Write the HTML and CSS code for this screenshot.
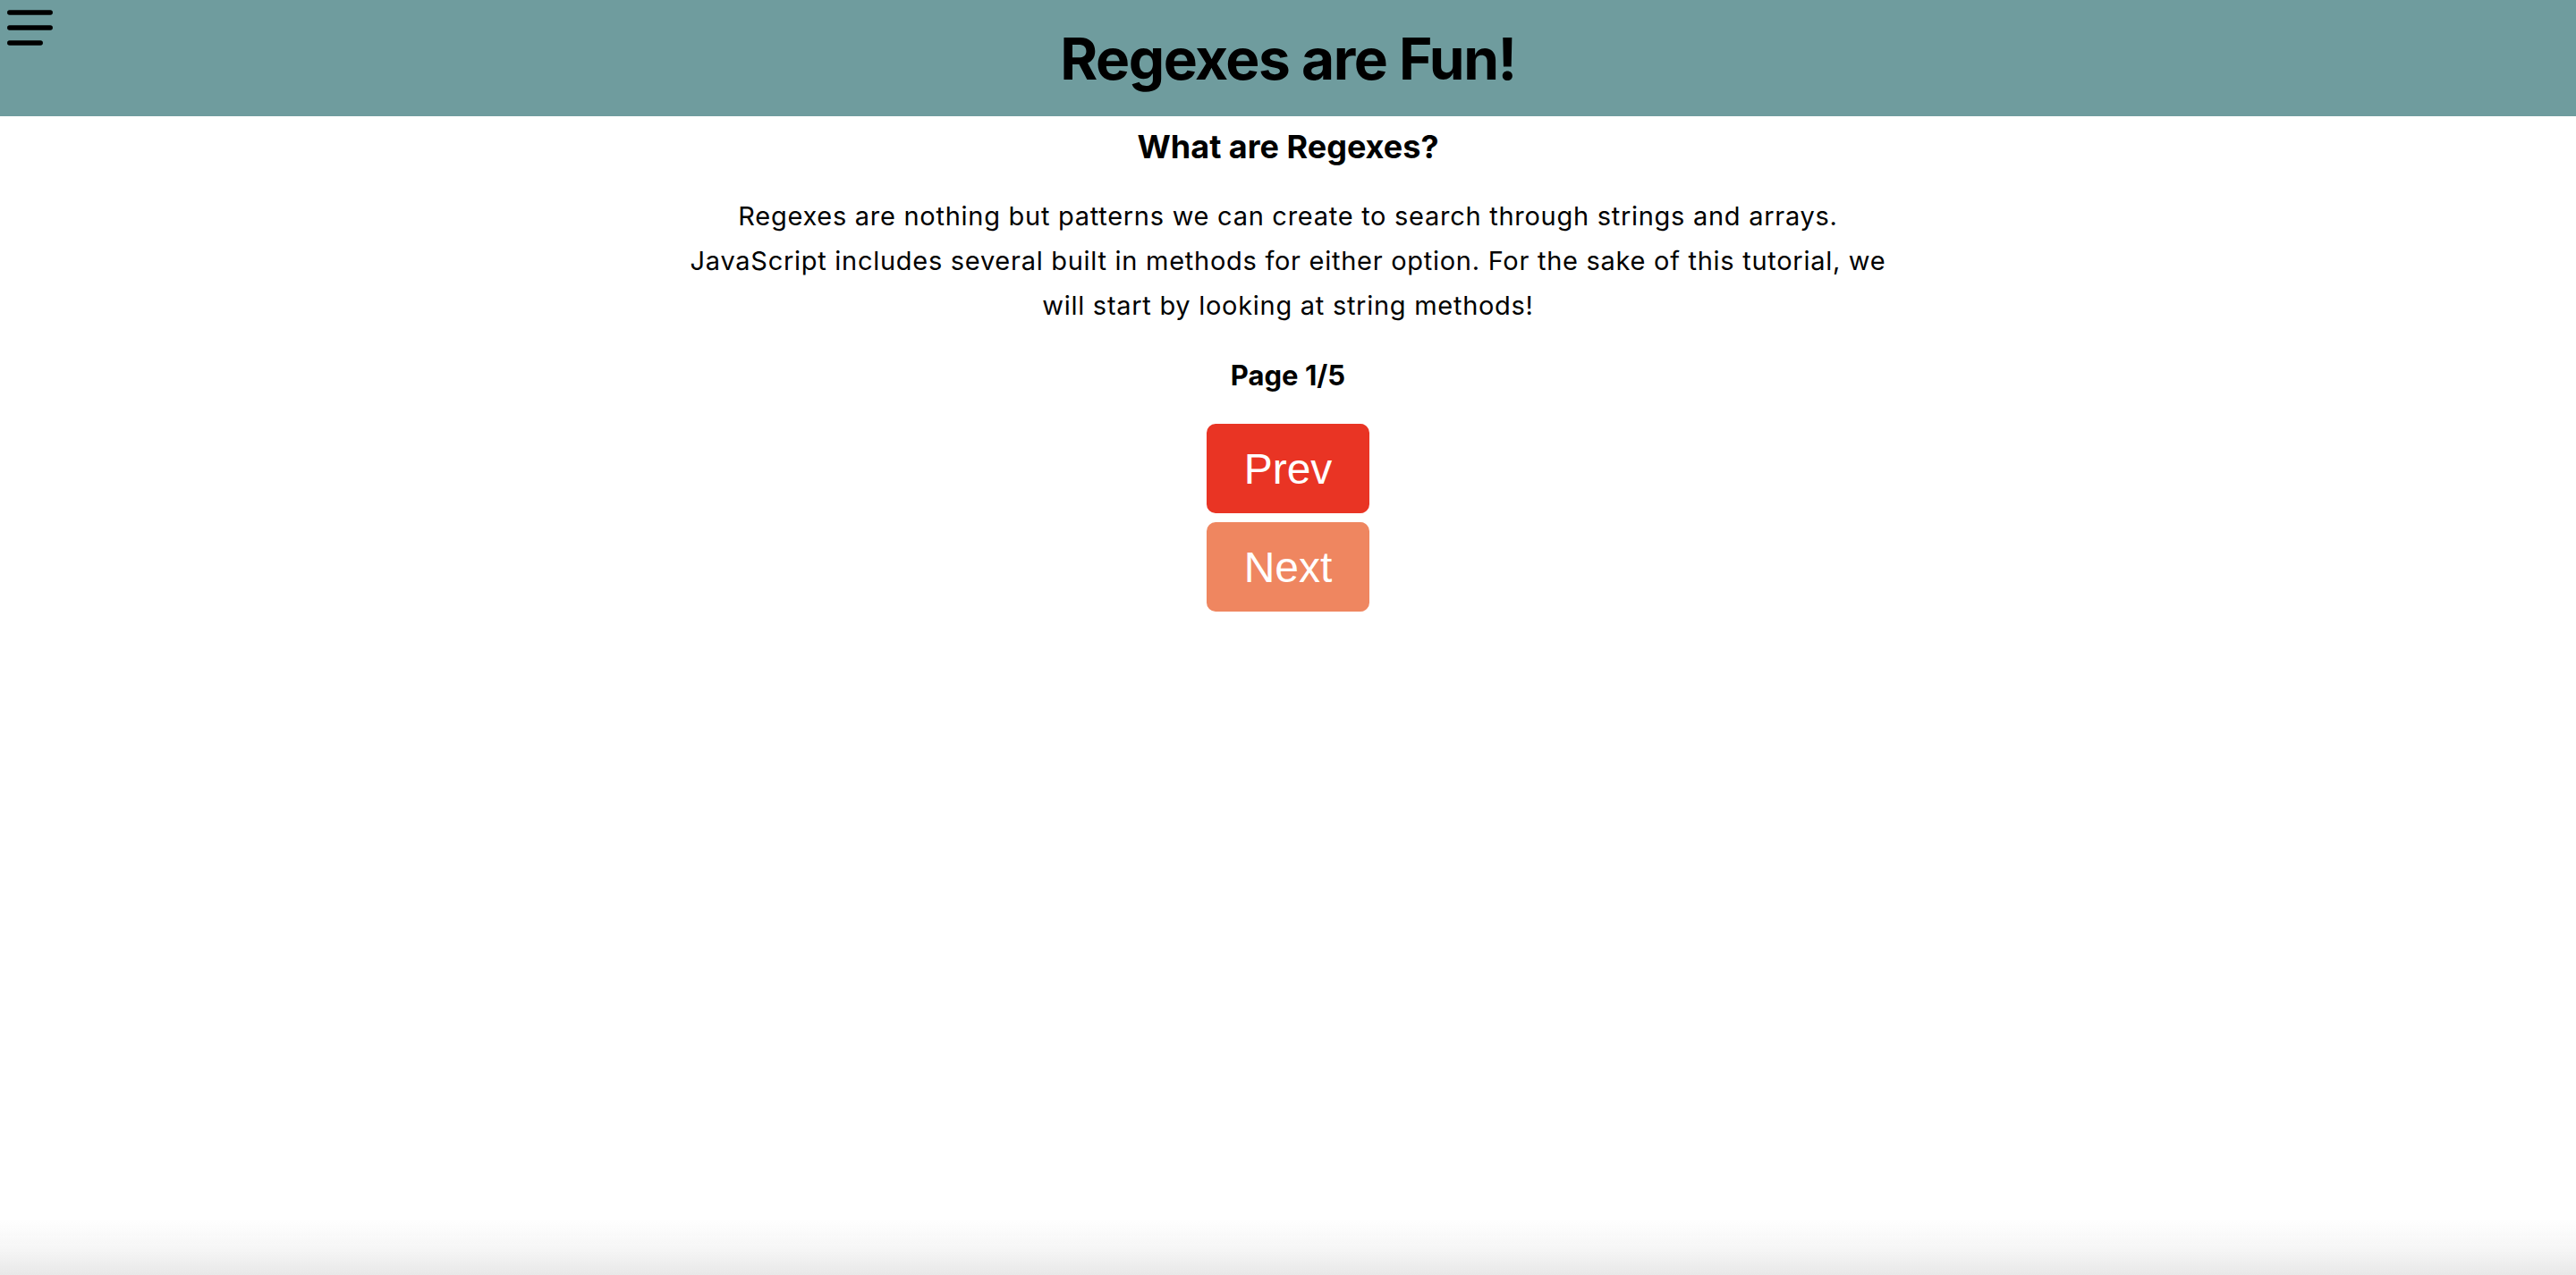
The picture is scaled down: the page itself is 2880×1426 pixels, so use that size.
FILE: index.html
```html
<!DOCTYPE html>
<html lang="en">
<head>
<meta charset="utf-8">
<title>Regexes are Fun!</title>
<link rel="stylesheet" href="styles.css">
</head>
<body>
<header class="topbar">
  <button class="menu-btn" aria-label="Menu">
    <svg width="64" height="56" viewBox="0 0 64 56">
      <line x1="10.75" y1="14" x2="56.25" y2="14" class="bar"/>
      <line x1="10.75" y1="31" x2="56.25" y2="31" class="bar"/>
      <line x1="10.75" y1="48" x2="45.25" y2="48" class="bar"/>
    </svg>
  </button>
  <h1 class="title">Regexes are Fun!</h1>
</header>
<main class="content">
  <h2 class="lesson-title">What are Regexes?</h2>
  <p class="lesson-text">Regexes are nothing but patterns we can create to search through strings and arrays. JavaScript includes several built in methods for either option. For the sake of this tutorial, we will start by looking at string methods!</p>
  <p class="page-count">Page 1/5</p>
  <div class="nav-buttons">
    <button class="nav-btn prev">Prev</button>
    <button class="nav-btn next">Next</button>
  </div>
</main>
<div class="bottom-fade"></div>
</body>
</html>
```

FILE: styles.css
```css
html, body {
  margin: 0;
  padding: 0;
  background: #ffffff;
}
body {
  font-family: Inter, "Noto Sans", sans-serif;
  color: #000;
  min-height: 1426px;
}
.topbar {
  position: relative;
  height: 130px;
  background: #6f9c9e;
  display: flex;
  align-items: center;
  justify-content: center;
}
.menu-btn {
  position: absolute;
  left: 0;
  top: 0;
  padding: 0;
  margin: 0;
  border: 0;
  background: transparent;
  width: 64px;
  height: 56px;
}
.menu-btn svg {
  display: block;
  width: 64px;
  height: 56px;
}
.menu-btn .bar {
  stroke: #000;
  stroke-width: 5.4;
  stroke-linecap: round;
}
.title {
  margin: 0;
  font-size: 64px;
  font-weight: 700;
  line-height: normal;
  letter-spacing: -1.5px;
}
.content {
  display: flex;
  flex-direction: column;
  align-items: center;
  text-align: center;
}
.lesson-title {
  margin: 12px 0 0;
  font-size: 36px;
  font-weight: 700;
  line-height: normal;
}
.lesson-text {
  margin: 31px 0 0;
  width: 1356px;
  font-size: 29px;
  letter-spacing: 0.72px;
  line-height: 50px;
}
.page-count {
  margin: 34px 0 0;
  font-size: 31px;
  font-weight: 700;
  line-height: normal;
}
.nav-buttons {
  margin-top: 36px;
  display: flex;
  flex-direction: column;
  gap: 10px;
}
.nav-btn {
  width: 182px;
  height: 100px;
  border: 0;
  border-radius: 10px;
  color: #fff;
  font-family: "Liberation Sans", Arial, sans-serif;
  font-size: 48px;
  padding: 0;
}
.prev { background: #e93424; }
.next { background: #ef8660; }
.bottom-fade {
  position: fixed;
  left: 0;
  right: 0;
  bottom: 0;
  height: 64px;
  background: linear-gradient(to bottom, rgba(232,232,232,0) 0%, rgba(232,232,232,0.4) 55%, rgba(232,232,232,1) 100%);
  pointer-events: none;
}
```
